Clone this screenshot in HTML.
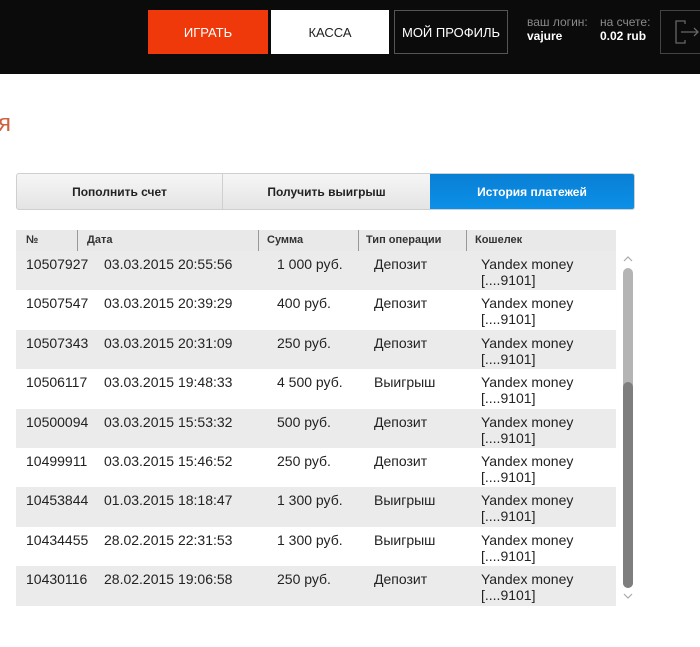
<!DOCTYPE html>
<html><head><meta charset="utf-8"><style>
*{margin:0;padding:0;box-sizing:border-box}
body{width:700px;height:647px;background:#fff;font-family:"Liberation Sans",Arial,sans-serif;position:relative;overflow:hidden;color:#222}
.top{position:absolute;left:0;top:0;width:700px;height:74px;background:#0b0b0b}
.b{position:absolute;top:10px;height:44px;display:flex;align-items:center;justify-content:center;font-size:13px}
.lbl{position:absolute;font-size:12px;color:#8a8a8a}
.val{position:absolute;font-size:12px;color:#fff;font-weight:bold}
.tabs{position:absolute;left:16px;top:173px;width:619px;height:37px;border:1px solid #cfcfcf;border-radius:3px;background:linear-gradient(#f6f6f6,#e4e4e4);display:flex;overflow:hidden}
.tabs div{display:flex;align-items:center;justify-content:center;font-size:12px;font-weight:bold;color:#222}
.hdr{position:absolute;left:16px;top:230px;width:600px;height:21px;background:#e9e9e9;font-size:11px;font-weight:bold;color:#333}
.hdr span{position:absolute;top:4px}
.hdr i{position:absolute;top:0;width:1px;height:21px;background:#999}
.row{position:absolute;left:16px;width:600px;height:39.4px;font-size:14px;color:#222}
.row.g{background:#ebebeb}
.row span{position:absolute;top:5px;line-height:16px}
</style></head><body>
<div class="top">
<div class="b" style="left:148px;width:120px;background:#f0390a;color:#fff">ИГРАТЬ</div>
<div class="b" style="left:271px;width:118px;background:#fff;color:#222">КАССА</div>
<div class="b" style="left:394px;width:114px;border:1px solid #555;color:#fff">МОЙ ПРОФИЛЬ</div>
<div class="lbl" style="left:527px;top:15px">ваш логин:</div>
<div class="val" style="left:527px;top:29px">vajure</div>
<div class="lbl" style="left:600px;top:15px">на счете:</div>
<div class="val" style="left:600px;top:29px">0.02 rub</div>
<div style="position:absolute;left:660px;top:10px;width:50px;height:44px;border:1px solid #444"></div>
<svg style="position:absolute;left:675px;top:20px" width="25" height="24" viewBox="0 0 25 24" fill="none" stroke="#666" stroke-width="1.3"><path d="M10 4V1H1v22h9v-3"/><path d="M6 12h17M19 8l4 4-4 4"/></svg>
</div>
<div style="position:absolute;left:-2px;top:110px;font-size:24px;color:#d0603e">я</div>
<div class="tabs">
<div style="width:206px;border-right:1px solid #cfcfcf">Пополнить счет</div>
<div style="width:207px">Получить выигрыш</div>
<div style="flex:1;background:linear-gradient(#0a7fd4,#0b90e8);color:#fff">История платежей</div>
</div>
<div class="hdr">
<span style="left:10px">№</span><i style="left:61px"></i>
<span style="left:71px">Дата</span><i style="left:242px"></i>
<span style="left:251px">Сумма</span><i style="left:342px"></i>
<span style="left:350px">Тип операции</span><i style="left:450px"></i>
<span style="left:459px">Кошелек</span>
</div>
<div class="row g" style="top:251px"><span style="left:10px">10507927</span><span style="left:88px">03.03.2015 20:55:56</span><span style="left:261px">1 000 руб.</span><span style="left:358px">Депозит</span><span style="left:465px">Yandex money<br>[....9101]</span></div>
<div class="row" style="top:290.4px"><span style="left:10px">10507547</span><span style="left:88px">03.03.2015 20:39:29</span><span style="left:261px">400 руб.</span><span style="left:358px">Депозит</span><span style="left:465px">Yandex money<br>[....9101]</span></div>
<div class="row g" style="top:329.8px"><span style="left:10px">10507343</span><span style="left:88px">03.03.2015 20:31:09</span><span style="left:261px">250 руб.</span><span style="left:358px">Депозит</span><span style="left:465px">Yandex money<br>[....9101]</span></div>
<div class="row" style="top:369.2px"><span style="left:10px">10506117</span><span style="left:88px">03.03.2015 19:48:33</span><span style="left:261px">4 500 руб.</span><span style="left:358px">Выигрыш</span><span style="left:465px">Yandex money<br>[....9101]</span></div>
<div class="row g" style="top:408.6px"><span style="left:10px">10500094</span><span style="left:88px">03.03.2015 15:53:32</span><span style="left:261px">500 руб.</span><span style="left:358px">Депозит</span><span style="left:465px">Yandex money<br>[....9101]</span></div>
<div class="row" style="top:448px"><span style="left:10px">10499911</span><span style="left:88px">03.03.2015 15:46:52</span><span style="left:261px">250 руб.</span><span style="left:358px">Депозит</span><span style="left:465px">Yandex money<br>[....9101]</span></div>
<div class="row g" style="top:487.4px"><span style="left:10px">10453844</span><span style="left:88px">01.03.2015 18:18:47</span><span style="left:261px">1 300 руб.</span><span style="left:358px">Выигрыш</span><span style="left:465px">Yandex money<br>[....9101]</span></div>
<div class="row" style="top:526.8px"><span style="left:10px">10434455</span><span style="left:88px">28.02.2015 22:31:53</span><span style="left:261px">1 300 руб.</span><span style="left:358px">Выигрыш</span><span style="left:465px">Yandex money<br>[....9101]</span></div>
<div class="row g" style="top:566.2px"><span style="left:10px">10430116</span><span style="left:88px">28.02.2015 19:06:58</span><span style="left:261px">250 руб.</span><span style="left:358px">Депозит</span><span style="left:465px">Yandex money<br>[....9101]</span></div>
<svg style="position:absolute;left:622px;top:255px" width="12" height="8" viewBox="0 0 12 8" fill="none" stroke="#aaa" stroke-width="1.2"><path d="M2 6l4-4 4 4"/></svg>
<div style="position:absolute;left:623px;top:268px;width:10px;height:320px;border-radius:5px;background:#b4b4b4"></div>
<div style="position:absolute;left:623px;top:382px;width:10px;height:206px;border-radius:5px;background:#7e7e7e"></div>
<svg style="position:absolute;left:622px;top:592px" width="12" height="8" viewBox="0 0 12 8" fill="none" stroke="#aaa" stroke-width="1.2"><path d="M2 2l4 4 4-4"/></svg>
</body></html>
